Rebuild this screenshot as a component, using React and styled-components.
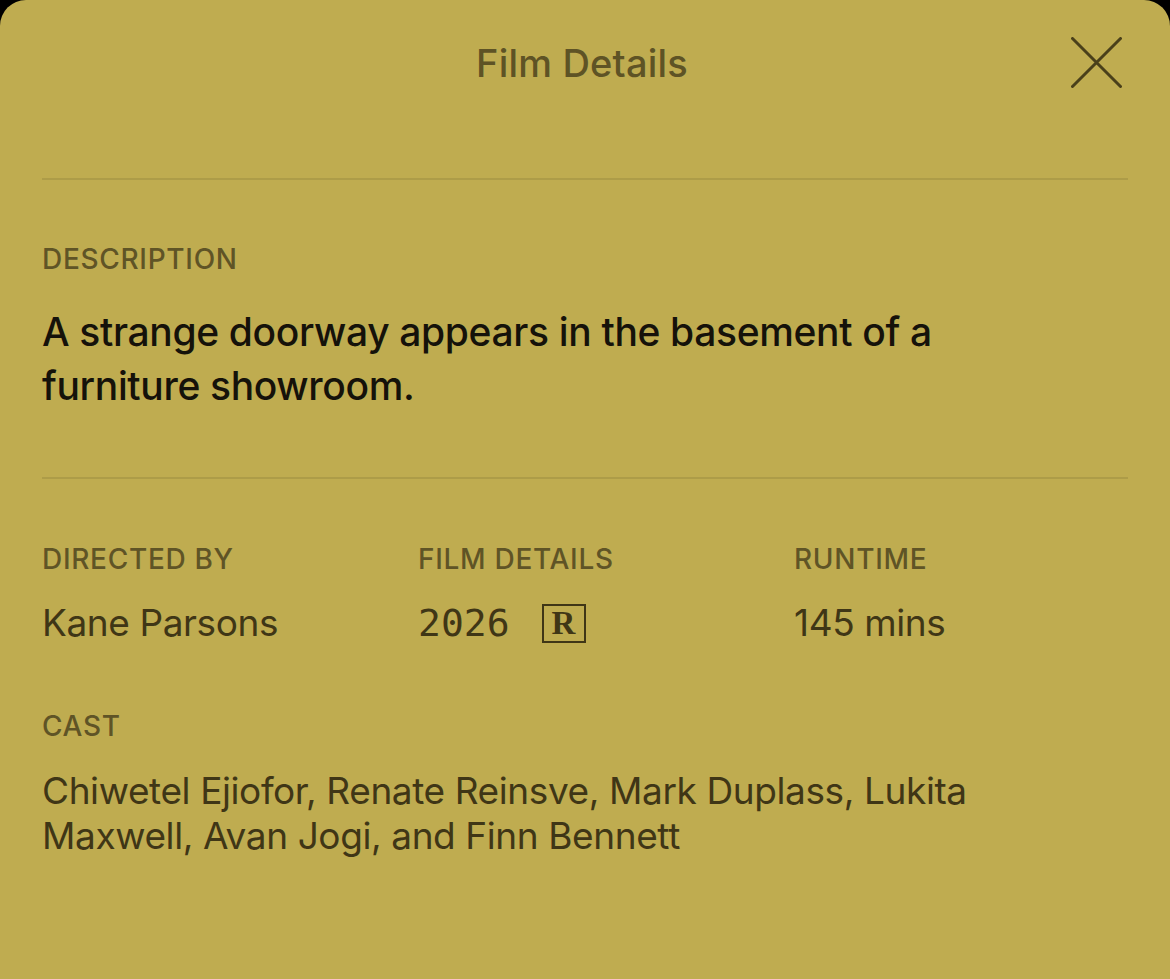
import styled, { createGlobalStyle } from "styled-components";

const GlobalStyle = createGlobalStyle`
  html, body {
    margin: 0;
    padding: 0;
    background: #000;
  }
  body {
    font-family: Inter, "Noto Sans", "Liberation Sans", sans-serif;
  }
`;

const Sheet = styled.div`
  min-height: 100vh;
  background: #bfac50;
  border-radius: 26px 26px 0 0;
  box-sizing: border-box;
`;

const Header = styled.header`
  display: grid;
  grid-template-columns: 1fr auto 1fr;
  align-items: center;
  padding: 37px 48px 90px 42px;
`;

const Title = styled.h1`
  grid-column: 2;
  margin: 0;
  font-size: 38px;
  font-weight: 500;
  letter-spacing: 0.2px;
  color: #5e5325;
`;

const CloseButton = styled.button`
  grid-column: 3;
  justify-self: end;
  width: 51px;
  height: 51px;
  padding: 0;
  border: none;
  background: none;
  cursor: pointer;
  svg {
    display: block;
  }
`;

const Divider = styled.hr`
  margin: 0 42px;
  border: none;
  height: 2px;
  background: #ad9c48;
`;

const Section = styled.section`
  padding: ${(props) => props.pad || "62px 42px 64px"};
`;

const Label = styled.div`
  font-size: 28px;
  line-height: 34px;
  font-weight: 500;
  color: #5f5426;
  letter-spacing: 0.7px;
`;

const Description = styled.p`
  margin: 29px 0 0;
  max-width: 960px;
  font-size: 39px;
  line-height: 54px;
  font-weight: 500;
  color: #15120a;
  letter-spacing: -0.35px;
`;

const InfoGrid = styled.div`
  display: grid;
  grid-template-columns: 376px 376px 1fr;
`;

const Value = styled.div`
  margin-top: 25px;
  display: flex;
  align-items: center;
  gap: 32px;
  font-size: 37px;
  line-height: 44px;
  color: #3f3616;
  letter-spacing: -0.4px;
`;

const Year = styled.span`
  font-family: "DejaVu Sans Mono", "Liberation Mono", monospace;
  font-size: 38px;
  letter-spacing: 0;
`;

const Rating = styled.span`
  display: inline-flex;
  align-items: center;
  justify-content: center;
  width: 40px;
  height: 35px;
  border: 2px solid #3f3616;
  font-family: "Liberation Serif", "DejaVu Serif", serif;
  font-weight: 700;
  font-size: 33px;
  line-height: 1;
  letter-spacing: 0;
`;

const Cast = styled.p`
  margin: 25px 0 0;
  max-width: 1000px;
  font-size: 37px;
  line-height: 45px;
  color: #3f3616;
  letter-spacing: -0.4px;
`;

const CastBlock = styled.div`
  margin-top: 64px;
`;

function CloseIcon() {
  return (
    <svg width="51" height="51" viewBox="0 0 51 51">
      <path
        d="M1.5 1.5 L49.5 49.5 M49.5 1.5 L1.5 49.5"
        stroke="#4a401a"
        strokeWidth="3"
        strokeLinecap="round"
        fill="none"
      />
    </svg>
  );
}

export default function App() {
  return (
    <>
      <GlobalStyle />
      <Sheet>
        <Header>
          <Title>Film Details</Title>
          <CloseButton aria-label="Close">
            <CloseIcon />
          </CloseButton>
        </Header>
        <Divider />
        <Section>
          <Label>DESCRIPTION</Label>
          <Description>
            A strange doorway appears in the basement of a furniture showroom.
          </Description>
        </Section>
        <Divider />
        <Section pad="63px 42px 40px">
          <InfoGrid>
            <div>
              <Label>DIRECTED BY</Label>
              <Value>Kane Parsons</Value>
            </div>
            <div>
              <Label>FILM DETAILS</Label>
              <Value>
                <Year>2026</Year>
                <Rating>R</Rating>
              </Value>
            </div>
            <div>
              <Label>RUNTIME</Label>
              <Value>145 mins</Value>
            </div>
          </InfoGrid>
          <CastBlock>
            <Label>CAST</Label>
            <Cast>
              Chiwetel Ejiofor, Renate Reinsve, Mark Duplass, Lukita Maxwell,
              Avan Jogi, and Finn Bennett
            </Cast>
          </CastBlock>
        </Section>
      </Sheet>
    </>
  );
}
